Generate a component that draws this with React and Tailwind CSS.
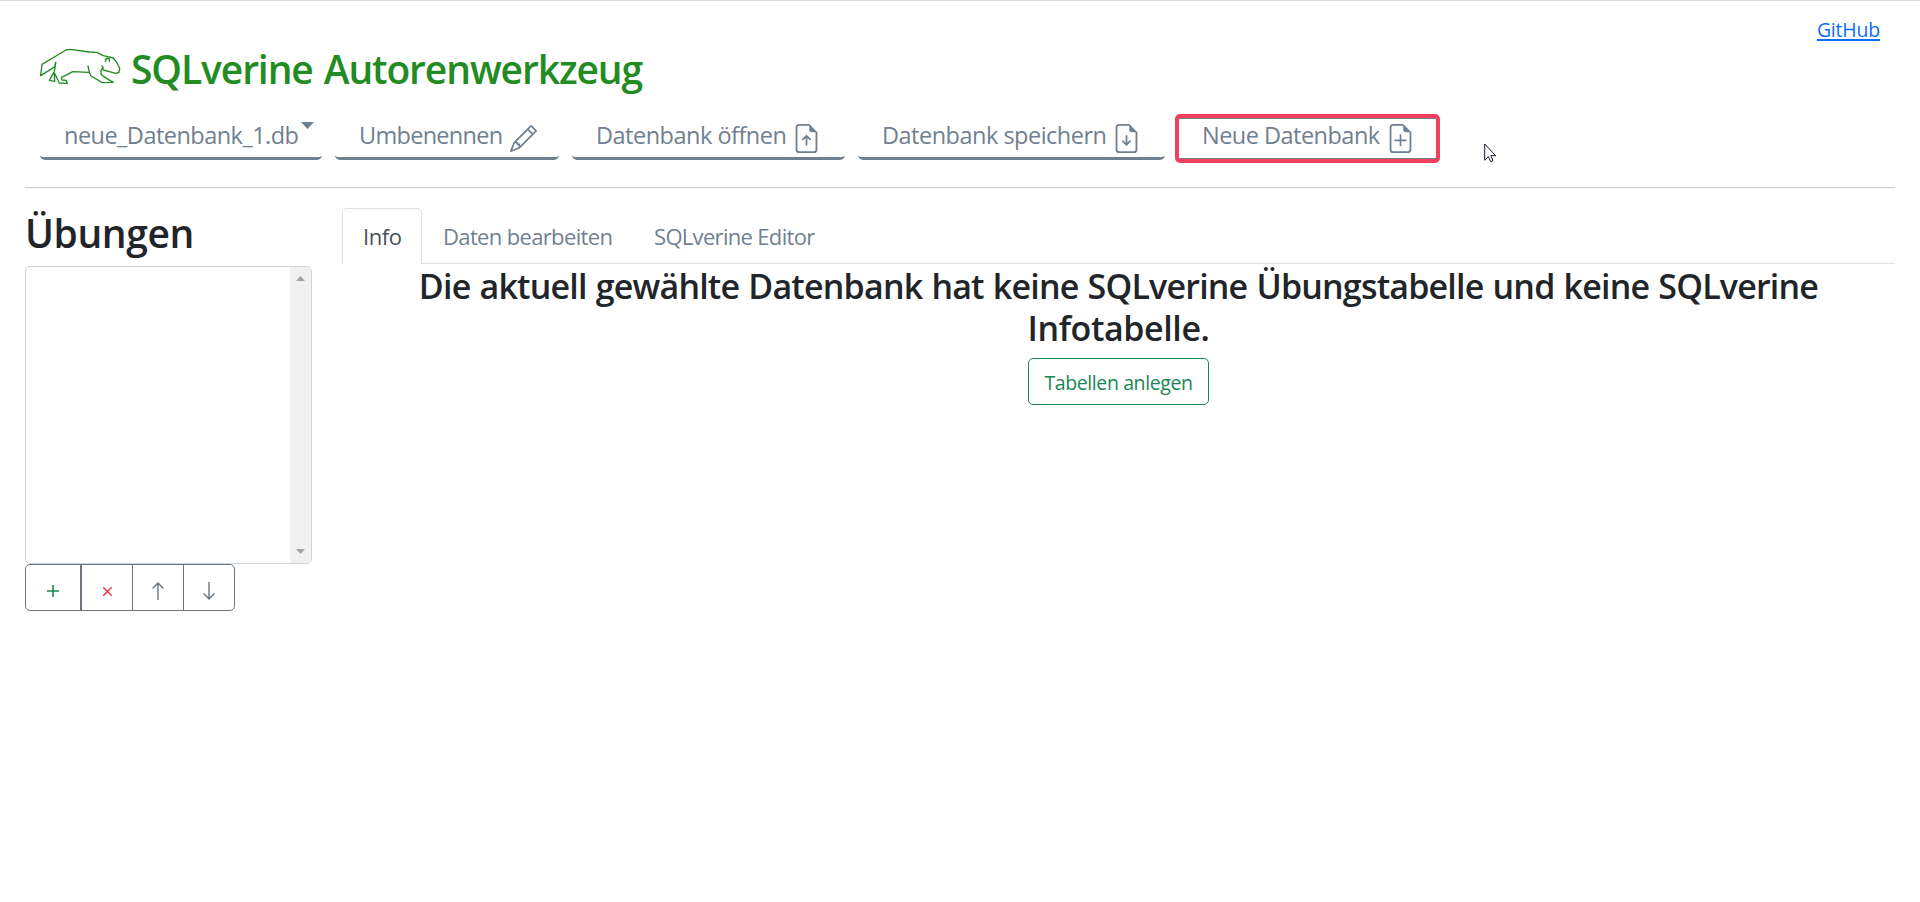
import { BsPencil, BsFileEarmarkArrowUp, BsFileEarmarkArrowDown } from "react-icons/bs";

function Logo() {
  return (
    <svg className="mt-[43px] h-[44px] w-[90px] shrink-0" viewBox="48 42 270 132" fill="none" stroke="#228b22" strokeWidth="4" strokeLinejoin="round" strokeLinecap="round">
      <path d="M107 97 105 110 62 137 66 103 138 60 150 58 208 66 230 67 250 77 280 84 291 98 299 115 297 127 287 130 268 125 250 120 246 108" />
      <path d="M256 94 260 85 268 86 268 94M262 84 256 88" />
      <path d="M107 97 103 125 88 151 104 154 103 128 118 159 142 160 138 151 126 150 124 142 137 136 158 125 208 127" />
      <path d="M204 108 208 127 213 138 247 158 280 157 250 139 243 133 243 122 249 112" />
    </svg>
  );
}

function FilePlus() {
  return (
    <svg className="mt-[5px] ml-[6px] size-[29px]" viewBox="0 0 16 16" fill="currentColor">
      <path d="M14 4.5V14a2 2 0 0 1-2 2H4a2 2 0 0 1-2-2V2a2 2 0 0 1 2-2h5.500zm-3 0A1.500 1.500 0 0 1 9.500 3V1H4a1 1 0 0 0-1 1v12a1 1 0 0 0 1 1h8a1 1 0 0 0 1-1V4.500z" />
      <path d="M8 5.700V12.300M4.700 9H11.300" fill="none" stroke="currentColor" strokeWidth="0.9" />
    </svg>
  );
}

const toolButton = "flex h-[46px] shrink-0 items-start rounded-[5px] border-b-[3px] border-[#708090] text-[23.5px] leading-[42px] text-[#708090]";

export default function App() {
  return (
    <div className="h-[902px] overflow-hidden border-t border-[#d9d9de] bg-white font-['Open_Sans','Noto_Sans',sans-serif] text-[#212529]">
      <header className="flex h-[113px] justify-between pr-10 pl-9">
        <div className="flex items-start">
          <Logo />
          <h1 className="mt-[43px] ml-[5px] text-[39px] leading-[50px] font-semibold tracking-[-1.1px] [word-spacing:2px] whitespace-nowrap text-[#228b22]">SQLverine Autorenwerkzeug</h1>
        </div>
        <a className="mt-[14px] h-[30px] text-[19.5px] leading-[30px] tracking-[-0.2px] text-[#0d6efd] underline decoration-2 underline-offset-2">GitHub</a>
      </header>

      <nav className="flex h-[73px] items-start pl-10">
        <button className={`${toolButton} w-[282px] pl-[24px] tracking-[-0.53px]`}>
          neue_Datenbank_1.db
          <svg className="mt-[8px] ml-[3px] h-[7px] w-[13px]" viewBox="0 0 13 7"><path d="M0 0H13L6.500 7Z" fill="#708090" /></svg>
        </button>
        <button className={`${toolButton} ml-[13px] w-[224px] pl-[24px] tracking-[-0.7px]`}>
          Umbenennen
          <BsPencil className="mt-[11px] ml-[7px] size-[27px]" />
        </button>
        <button className={`${toolButton} ml-[13px] w-[273px] pl-[24px] tracking-[-0.5px]`}>
          Datenbank öffnen
          <BsFileEarmarkArrowUp className="mt-[10px] ml-[6px] size-[29px]" />
        </button>
        <button className={`${toolButton} ml-[13px] w-[307px] pl-[24px] tracking-[-0.5px]`}>
          Datenbank speichern
          <BsFileEarmarkArrowDown className="mt-[10px] ml-[6px] size-[29px]" />
        </button>
        <div className="ml-[10px] h-[49px] w-[265px] shrink-0 rounded-[5px] border-4 border-[#f23f5d]">
          <button className="flex h-[41px] w-full items-start border-y border-[#708090] pl-[23px] text-[23.5px] leading-[32px] tracking-[-0.52px] text-[#708090]">
            Neue Datenbank
            <FilePlus />
          </button>
        </div>
        <svg className="mt-[29px] ml-[44px] h-[20px] w-[13px]" viewBox="0 0 13 20">
          <path d="M.7 1V17.200L4.300 13.700 6.800 18.700 9 17.600 6.800 12.700H11.700Z" fill="#fff" stroke="#15152a" strokeWidth="1" />
        </svg>
      </nav>

      <div className="mx-[25px] h-px bg-[#c8c8c8]" />

      <main className="flex px-[25px]">
        <aside className="w-[287px] shrink-0">
          <h2 className="mt-[20px] h-[58px] text-[39px] leading-[50px] font-semibold tracking-[-0.4px]">Übungen</h2>
          <div className="flex h-[298px] justify-end overflow-hidden rounded-[5px] border border-[#ced4da]">
            <div className="flex w-[21px] flex-col items-center justify-between bg-[#f0f0f0] pt-[9px] pb-[9px]">
              <svg className="h-[5px] w-[9px]" viewBox="0 0 9 5"><path d="M0 5 4.500 0 9 5Z" fill="#a3a3a3" /></svg>
              <svg className="h-[5px] w-[9px]" viewBox="0 0 9 5"><path d="M0 0 4.500 5 9 0Z" fill="#a3a3a3" /></svg>
            </div>
          </div>
          <div className="flex h-[47px] w-[210px] rounded-[5px] border border-[#6c757d]">
            <button className="flex w-[56px] items-center justify-center border-r-2 border-[#6c757d] pt-[7px]">
              <svg className="size-[12px]" viewBox="0 0 12 12" stroke="#198754" strokeWidth="1.6"><path d="M6 0V12M0 6H12" /></svg>
            </button>
            <button className="flex w-[51px] items-center justify-center border-r border-[#6c757d] pt-[7px]">
              <svg className="size-[9px]" viewBox="0 0 9 9" stroke="#dc3545" strokeWidth="1.4"><path d="M.3 .3 8.700 8.700M8.700 .3 .3 8.700" /></svg>
            </button>
            <button className="flex w-[51px] items-center justify-center border-r border-[#6c757d] pt-[7px]">
              <svg className="h-[18px] w-[12px]" viewBox="0 0 12 18" fill="none" stroke="#6c757d" strokeWidth="1.4"><path d="M6 18V1M.6 6.400 6 1 11.400 6.400" /></svg>
            </button>
            <button className="flex w-[50px] items-center justify-center pt-[7px]">
              <svg className="h-[18px] w-[12px]" viewBox="0 0 12 18" fill="none" stroke="#6c757d" strokeWidth="1.4"><path d="M6 0V17M.6 11.600 6 17 11.400 11.600" /></svg>
            </button>
          </div>
        </aside>

        <section className="ml-[30px] flex flex-1 flex-col pt-[20px]">
          <div className="flex h-[56px] border-b border-[#dee2e6] text-[22px] leading-[57px] text-[#708090]">
            <button className="h-[56px] w-[80px] shrink-0 rounded-t-[5px] border border-b-0 border-[#dee2e6] bg-white pl-[20px] text-left leading-[55px] tracking-[-0.4px] text-[#495057]">Info</button>
            <button className="ml-[21px] w-[189px] shrink-0 text-left tracking-[-0.65px] whitespace-nowrap">Daten bearbeiten</button>
            <button className="ml-[22px] shrink-0 text-left tracking-[-0.68px] whitespace-nowrap">SQLverine Editor</button>
          </div>
          <div className="mt-px flex flex-col items-center">
            <h3 className="text-center text-[34px] leading-[42px] font-semibold tracking-[-0.8px] [word-spacing:1px] whitespace-nowrap">
              Die aktuell gewählte Datenbank hat keine SQLverine Übungstabelle und keine SQLverine
              <br />
              <span className="tracking-[-0.4px]">Infotabelle.</span>
            </h3>
            <button className="mt-[9px] h-[47px] w-[181px] rounded-[5px] border border-[#198754] pt-[2px] text-[19.5px] tracking-[-0.4px] text-[#198754]">Tabellen anlegen</button>
          </div>
        </section>
      </main>
    </div>
  );
}
